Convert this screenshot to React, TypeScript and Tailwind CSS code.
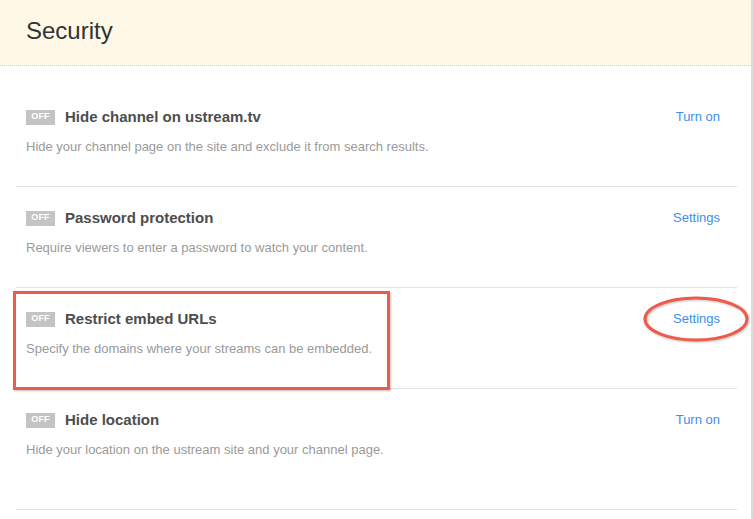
import React from 'react';

type Setting = {
  title: string;
  description: string;
  action: string;
  highlight?: boolean;
  last?: boolean;
};

const settings: Setting[] = [
  {
    title: 'Hide channel on ustream.tv',
    description: 'Hide your channel page on the site and exclude it from search results.',
    action: 'Turn on',
  },
  {
    title: 'Password protection',
    description: 'Require viewers to enter a password to watch your content.',
    action: 'Settings',
  },
  {
    title: 'Restrict embed URLs',
    description: 'Specify the domains where your streams can be embedded.',
    action: 'Settings',
    highlight: true,
  },
  {
    title: 'Hide location',
    description: 'Hide your location on the ustream site and your channel page.',
    action: 'Turn on',
    last: true,
  },
];

const SettingRow = ({ item }: { item: Setting }) => {
  return (
    <div
      className={`relative flex items-start justify-between border-b border-[#e2e2e2] pl-[10px] pr-[17px] pt-[22px] ${
        item.last ? 'pb-[50px]' : 'pb-[30px]'
      }`}
    >
      <div>
        <div className="flex h-[18px] items-center">
          <span className="mr-[10px] flex h-[15px] w-[29px] items-center justify-center bg-[#c4c4c4] text-[9px] font-bold tracking-wide text-white">
            OFF
          </span>
          <h3 className="text-[15px] font-bold leading-[18px] text-[#4d4d4d]">{item.title}</h3>
        </div>
        <p className="mt-[12px] text-[13px] leading-[18px] text-[#9a9a9a]">{item.description}</p>
      </div>
      <a href="#" className="text-[13px] leading-[18px] text-[#3d8ef0]">
        {item.action}
      </a>

      {item.highlight && (
        <>
          <div className="pointer-events-none absolute left-[-3px] top-[3px] h-[99px] w-[377px] border-[3px] border-[#ee5b4c] shadow-[1px_1px_2px_rgba(0,0,0,0.25)]" />
          <svg
            className="pointer-events-none absolute right-[-13px] top-[8px]"
            width="108"
            height="48"
            viewBox="0 0 108 48"
          >
            <ellipse
              cx="54"
              cy="23"
              rx="51"
              ry="21"
              fill="none"
              stroke="#ee5b4c"
              strokeWidth="3"
              style={{ filter: 'drop-shadow(1px 1px 1px rgba(0,0,0,0.25))' }}
            />
          </svg>
        </>
      )}
    </div>
  );
};

const App = () => {
  return (
    <div
      className="flex h-[519px] w-[753px] overflow-hidden bg-white"
      style={{ fontFamily: '"Liberation Sans", Arial, sans-serif' }}
    >
      <div className="flex-1">
        <header className="flex h-[66px] items-center border-b border-dotted border-[#cfcfcf] bg-[#fef8e7] px-[26px] pb-[3px]">
          <h1 className="text-[24px] font-normal text-[#333]">Security</h1>
        </header>
        <div className="ml-4 mr-[14px] pt-[20px]">
          {settings.map((item) => (
            <SettingRow key={item.title} item={item} />
          ))}
        </div>
      </div>
      <div className="w-[2px] bg-[#dcdcdc]" />
    </div>
  );
};

export default App;
